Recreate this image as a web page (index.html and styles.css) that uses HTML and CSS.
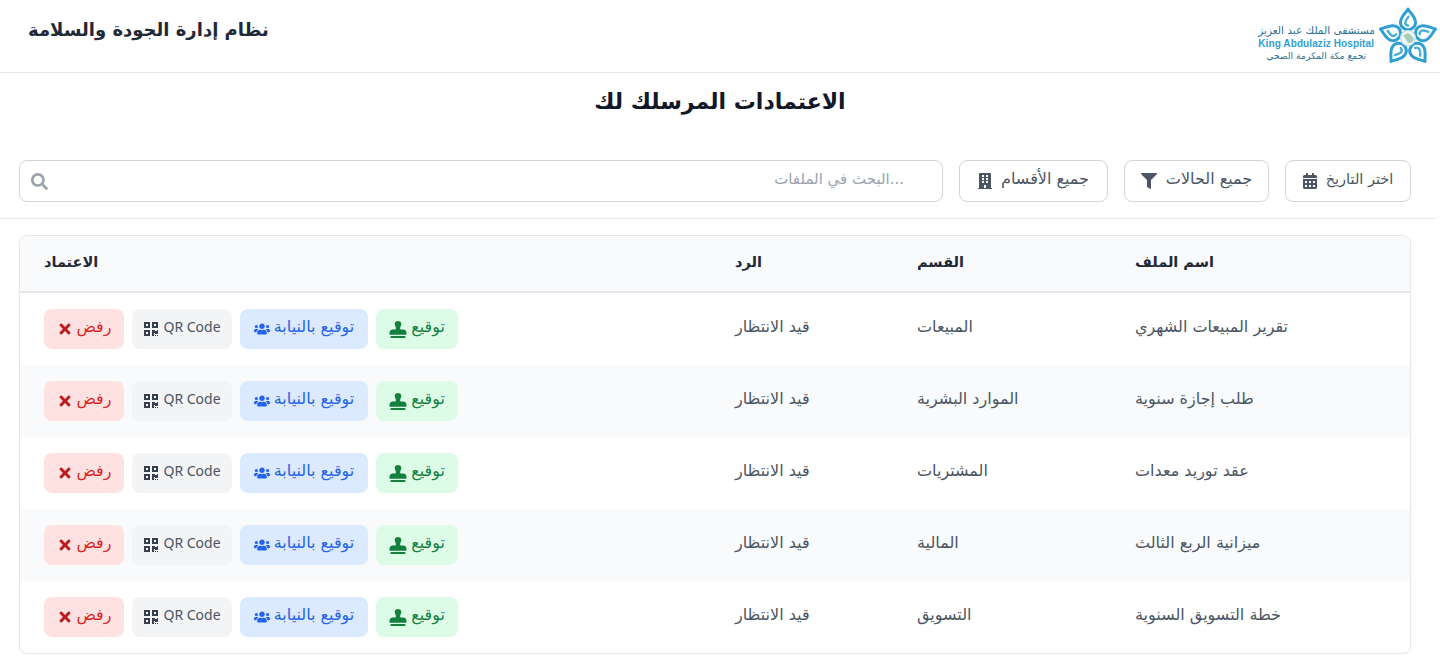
FILE: index.html
```html
<!DOCTYPE html>
<html lang="ar" dir="rtl">
<head>
	<meta charset="UTF-8">
	<title>نظام إدارة الجودة والسلامة</title>
	<link rel="stylesheet" href="styles.css">
</head>
<body>
	<svg class="icon-defs" xmlns="http://www.w3.org/2000/svg">
		<symbol id="i-search" viewBox="0 0 512 512"><path d="M505 442.7L405.3 343c-4.500-4.500-10.600-7-17-7H372c27.600-35.300 44-79.700 44-128C416 93.100 322.900 0 208 0S0 93.100 0 208s93.100 208 208 208c48.300 0 92.700-16.400 128-44v16.300c0 6.400 2.500 12.500 7 17l99.700 99.700c9.400 9.400 24.600 9.400 33.900 0l28.300-28.300c9.400-9.400 9.400-24.600.1-34zM208 336c-70.700 0-128-57.200-128-128 0-70.700 57.200-128 128-128 70.700 0 128 57.200 128 128 0 70.700-57.200 128-128 128z"/></symbol>
		<symbol id="i-filter" viewBox="0 0 512 512"><path d="M487.976 0H24.028C2.710 0-8.047 25.866 7.058 40.971L192 225.941V432c0 7.831 3.821 15.170 10.237 19.662l80 55.980C298.020 518.690 320 507.493 320 487.980V225.941l184.947-184.970C520.021 25.896 509.338 0 487.976 0z"/></symbol>
		<symbol id="i-calendar" viewBox="0 0 448 512"><path d="M0 464c0 26.500 21.500 48 48 48h352c26.500 0 48-21.500 48-48V192H0v272zm320-196c0-6.600 5.400-12 12-12h40c6.600 0 12 5.400 12 12v40c0 6.600-5.400 12-12 12h-40c-6.600 0-12-5.400-12-12v-40zm0 128c0-6.600 5.400-12 12-12h40c6.600 0 12 5.400 12 12v40c0 6.600-5.400 12-12 12h-40c-6.600 0-12-5.400-12-12v-40zM192 268c0-6.600 5.400-12 12-12h40c6.600 0 12 5.400 12 12v40c0 6.600-5.400 12-12 12h-40c-6.600 0-12-5.400-12-12v-40zm0 128c0-6.600 5.400-12 12-12h40c6.600 0 12 5.400 12 12v40c0 6.600-5.400 12-12 12h-40c-6.600 0-12-5.400-12-12v-40zM64 268c0-6.600 5.400-12 12-12h40c6.600 0 12 5.400 12 12v40c0 6.600-5.400 12-12 12H76c-6.600 0-12-5.400-12-12v-40zm0 128c0-6.600 5.400-12 12-12h40c6.600 0 12 5.400 12 12v40c0 6.600-5.400 12-12 12H76c-6.600 0-12-5.400-12-12v-40zM400 64h-48V16c0-8.800-7.200-16-16-16h-32c-8.800 0-16 7.200-16 16v48H160V16c0-8.800-7.200-16-16-16h-32c-8.800 0-16 7.200-16 16v48H48C21.500 64 0 85.500 0 112v48h448v-48c0-26.500-21.500-48-48-48z"/></symbol>
		<symbol id="i-building" viewBox="0 0 448 512"><path d="M436 480h-20V24c0-13.255-10.745-24-24-24H56C42.745 0 32 10.745 32 24v456H12c-6.627 0-12 5.373-12 12v20h448v-20c0-6.627-5.373-12-12-12zM128 76c0-6.627 5.373-12 12-12h40c6.627 0 12 5.373 12 12v40c0 6.627-5.373 12-12 12h-40c-6.627 0-12-5.373-12-12V76zm0 96c0-6.627 5.373-12 12-12h40c6.627 0 12 5.373 12 12v40c0 6.627-5.373 12-12 12h-40c-6.627 0-12-5.373-12-12v-40zm52 148h-40c-6.627 0-12-5.373-12-12v-40c0-6.627 5.373-12 12-12h40c6.627 0 12 5.373 12 12v40c0 6.627-5.373 12-12 12zm76 160h-64v-84c0-6.627 5.373-12 12-12h40c6.627 0 12 5.373 12 12v84zm64-172c0 6.627-5.373 12-12 12h-40c-6.627 0-12-5.373-12-12v-40c0-6.627 5.373-12 12-12h40c6.627 0 12 5.373 12 12v40zm0-96c0 6.627-5.373 12-12 12h-40c-6.627 0-12-5.373-12-12v-40c0-6.627 5.373-12 12-12h40c6.627 0 12 5.373 12 12v40zm0-96c0 6.627-5.373 12-12 12h-40c-6.627 0-12-5.373-12-12V76c0-6.627 5.373-12 12-12h40c6.627 0 12 5.373 12 12v40z"/></symbol>
		<symbol id="i-stamp" viewBox="0 0 512 512"><path d="M32 512h448v-64H32v64zm384-256h-66.560c-16.260 0-29.440-13.180-29.440-29.440v-9.460c0-27.370 8.880-53.410 21.460-77.720 9.410-18.180 15.090-38.650 14.540-60.530C354.990 28.890 305.340 0 255.950 0c-49.390 0-98.990 28.890-99.950 78.850-.55 21.880 5.130 42.350 14.540 60.530 12.580 24.310 21.460 50.350 21.460 77.720v9.460c0 16.260-13.180 29.440-29.440 29.440H96c-53.020 0-96 42.980-96 96v48c0 8.840 7.160 16 16 16h480c8.840 0 16-7.160 16-16v-48c0-53.020-42.980-96-96-96z"/></symbol>
		<symbol id="i-users" viewBox="0 0 640 512"><path d="M96 224c35.300 0 64-28.700 64-64s-28.700-64-64-64-64 28.700-64 64 28.700 64 64 64zm448 0c35.300 0 64-28.700 64-64s-28.700-64-64-64-64 28.700-64 64 28.700 64 64 64zm32 32h-64c-17.600 0-33.500 7.100-45.100 18.600 40.300 22.100 68.900 62 75.100 109.400h66c17.700 0 32-14.300 32-32v-32c0-35.300-28.700-64-64-64zm-256 0c61.900 0 112-50.100 112-112S381.900 32 320 32 208 82.100 208 144s50.100 112 112 112zm76.800 32h-8.300c-20.800 10-43.900 16-68.500 16s-47.600-6-68.500-16h-8.300C179.600 288 128 339.600 128 403.200V432c0 26.500 21.500 48 48 48h288c26.500 0 48-21.500 48-48v-28.800c0-63.600-51.600-115.200-115.200-115.200zm-223.700-13.400C161.500 263.100 145.600 256 128 256H64c-35.300 0-64 28.700-64 64v32c0 17.700 14.300 32 32 32h65.900c6.300-47.400 34.900-87.300 75.200-109.400z"/></symbol>
		<symbol id="i-qr" viewBox="0 0 448 512"><path d="M0 224h192V32H0v192zM64 96h64v64H64V96zm192-64v192h192V32H256zm128 128h-64V96h64v64zM0 480h192V288H0v192zm64-128h64v64H64v-64zm352-64h32v128h-96v-32h-32v96h-64V288h96v32h64v-32zm0 160h32v32h-32v-32zm-64 0h32v32h-32v-32z"/></symbol>
		<symbol id="i-times" viewBox="0 0 352 512"><path d="M242.720 256l100.070-100.070c12.280-12.280 12.280-32.190 0-44.480l-22.240-22.240c-12.280-12.280-32.190-12.280-44.480 0L176 189.280 75.930 89.210c-12.280-12.280-32.190-12.280-44.480 0L9.210 111.450c-12.280 12.280-12.280 32.190 0 44.480L109.280 256 9.210 356.070c-12.280 12.280-12.280 32.190 0 44.480l22.240 22.240c12.280 12.280 32.200 12.280 44.480 0L176 322.720l100.070 100.070c12.280 12.280 32.200 12.280 44.480 0l22.240-22.240c12.280-12.280 12.280-32.190 0-44.480L242.720 256z"/></symbol>
	</svg>

	<header class="topbar">
		<div class="logo">
			<svg class="logo-star" viewBox="0 0 60 60" xmlns="http://www.w3.org/2000/svg">
				<g id="petal" fill="none" stroke-linejoin="round" stroke-linecap="round">
					<path d="M30 3C27.500 7.500 22.500 10.500 22.500 16.500c0 4 3 6.500 7.500 7.500 4.500-1 7.500-3.500 7.500-7.500C37.500 10.500 32.500 7.500 30 3z" stroke="#2f9fd4" stroke-width="3"/>
					<path d="M30.500 10.500c-1 2-3.200 3.300-3.200 6 0 1.800 1.200 2.800 2.700 3.200" stroke="#4aaedb" stroke-width="2.400"/>
				</g>
				<use href="#petal" transform="rotate(72 30 32)"/>
				<use href="#petal" transform="rotate(144 30 32)"/>
				<use href="#petal" transform="rotate(216 30 32)"/>
				<use href="#petal" transform="rotate(288 30 32)"/>
				<circle cx="30" cy="32" r="7.500" fill="#f3f8f7" stroke="#bcdcea" stroke-width="1.200"/>
				<path d="M25 29.500l5-2.500 3 2 3 4-2 3.500-4 .5-2-3.500z" fill="#a9cdbd"/>
			</svg>
			<div class="logo-text">
				<span class="logo-ar">مستشفى الملك عبد العزيز</span>
				<span class="logo-en">King Abdulaziz Hospital</span>
				<span class="logo-sub">تجمع مكة المكرمة الصحي</span>
			</div>
		</div>
		<div class="system-name">نظام إدارة الجودة والسلامة</div>
	</header>

	<h1 class="page-title">الاعتمادات المرسلك لك</h1>

	<section class="filters">
		<button class="filter-btn filter-date"><span>اختر التاريخ</span><svg class="ico"><use href="#i-calendar"/></svg></button>
		<button class="filter-btn filter-status"><span>جميع الحالات</span><svg class="ico ico-wide"><use href="#i-filter"/></svg></button>
		<button class="filter-btn filter-dept"><span>جميع الأقسام</span><svg class="ico"><use href="#i-building"/></svg></button>
		<div class="search-box">
			<span class="search-hint">...البحث في الملفات</span>
			<svg class="search-ico"><use href="#i-search"/></svg>
		</div>
	</section>

	<main class="table-wrap">
		<table class="files">
			<colgroup>
				<col class="col-file"><col class="col-dept"><col class="col-reply"><col>
			</colgroup>
			<thead>
				<tr><th>اسم الملف</th><th>القسم</th><th>الرد</th><th>الاعتماد</th></tr>
			</thead>
			<tbody>
				<tr>
					<td>تقرير المبيعات الشهري</td><td>المبيعات</td><td>قيد الانتظار</td>
					<td><div class="actions">
						<button class="act act-sign"><span>توقيع</span><svg class="ico ico-stamp"><use href="#i-stamp"/></svg></button>
						<button class="act act-proxy"><span>توقيع بالنيابة</span><svg class="ico ico-wide"><use href="#i-users"/></svg></button>
						<button class="act act-qr"><span>QR Code</span><svg class="ico ico-wide"><use href="#i-qr"/></svg></button>
						<button class="act act-reject"><span>رفض</span><svg class="ico ico-wide"><use href="#i-times"/></svg></button>
					</div></td>
				</tr>
				<tr>
					<td>طلب إجازة سنوية</td><td>الموارد البشرية</td><td>قيد الانتظار</td>
					<td><div class="actions">
						<button class="act act-sign"><span>توقيع</span><svg class="ico ico-stamp"><use href="#i-stamp"/></svg></button>
						<button class="act act-proxy"><span>توقيع بالنيابة</span><svg class="ico ico-wide"><use href="#i-users"/></svg></button>
						<button class="act act-qr"><span>QR Code</span><svg class="ico ico-wide"><use href="#i-qr"/></svg></button>
						<button class="act act-reject"><span>رفض</span><svg class="ico ico-wide"><use href="#i-times"/></svg></button>
					</div></td>
				</tr>
				<tr>
					<td>عقد توريد معدات</td><td>المشتريات</td><td>قيد الانتظار</td>
					<td><div class="actions">
						<button class="act act-sign"><span>توقيع</span><svg class="ico ico-stamp"><use href="#i-stamp"/></svg></button>
						<button class="act act-proxy"><span>توقيع بالنيابة</span><svg class="ico ico-wide"><use href="#i-users"/></svg></button>
						<button class="act act-qr"><span>QR Code</span><svg class="ico ico-wide"><use href="#i-qr"/></svg></button>
						<button class="act act-reject"><span>رفض</span><svg class="ico ico-wide"><use href="#i-times"/></svg></button>
					</div></td>
				</tr>
				<tr>
					<td>ميزانية الربع الثالث</td><td>المالية</td><td>قيد الانتظار</td>
					<td><div class="actions">
						<button class="act act-sign"><span>توقيع</span><svg class="ico ico-stamp"><use href="#i-stamp"/></svg></button>
						<button class="act act-proxy"><span>توقيع بالنيابة</span><svg class="ico ico-wide"><use href="#i-users"/></svg></button>
						<button class="act act-qr"><span>QR Code</span><svg class="ico ico-wide"><use href="#i-qr"/></svg></button>
						<button class="act act-reject"><span>رفض</span><svg class="ico ico-wide"><use href="#i-times"/></svg></button>
					</div></td>
				</tr>
				<tr>
					<td>خطة التسويق السنوية</td><td>التسويق</td><td>قيد الانتظار</td>
					<td><div class="actions">
						<button class="act act-sign"><span>توقيع</span><svg class="ico ico-stamp"><use href="#i-stamp"/></svg></button>
						<button class="act act-proxy"><span>توقيع بالنيابة</span><svg class="ico ico-wide"><use href="#i-users"/></svg></button>
						<button class="act act-qr"><span>QR Code</span><svg class="ico ico-wide"><use href="#i-qr"/></svg></button>
						<button class="act act-reject"><span>رفض</span><svg class="ico ico-wide"><use href="#i-times"/></svg></button>
					</div></td>
				</tr>
			</tbody>
		</table>
	</main>
</body>
</html>
```

FILE: styles.css
```css
* {
	box-sizing: border-box;
}

body {
	margin: 0;
	background-color: #fff;
	color: #374151;
	font-family: "DejaVu Sans", "Noto Sans", sans-serif;
	font-size: 16px;
}

button {
	font-family: inherit;
	cursor: pointer;
}

.icon-defs {
	display: none;
}

.ico {
	width: 14px;
	height: 16px;
	fill: currentColor;
	flex-shrink: 0;
}

.ico-wide {
	width: 16px;
}

.ico-stamp {
	width: 18px;
	height: 17px;
}

/* header */
.topbar {
	display: flex;
	justify-content: space-between;
	align-items: center;
	height: 73px;
	padding: 0 2px 0 28px;
	border-bottom: 1px solid #e5e7eb;
}

.logo {
	display: flex;
	align-items: center;
	gap: 3px;
}

.logo-star {
	width: 60px;
	height: 60px;
}

.logo-text {
	display: flex;
	flex-direction: column;
	align-items: flex-end;
	padding-top: 11px;
	color: #2b6f96;
}

.logo-ar {
	font-size: 10.500px;
	line-height: 14px;
}

.logo-en {
	direction: ltr;
	font-family: "Liberation Sans", sans-serif;
	font-size: 10px;
	font-weight: bold;
	letter-spacing: 0.1px;
	line-height: 13px;
	color: #2f9fd4;
}

.logo-sub {
	font-size: 9.200px;
	line-height: 11px;
	margin-left: 8px;
}

.system-name {
	padding-bottom: 14px;
	font-size: 18px;
	font-weight: bold;
	color: #1f2937;
}

.page-title {
	margin: 17px 0 0;
	height: 70px;
	text-align: center;
	font-size: 22px;
	line-height: 24px;
	color: #111827;
}

/* filter bar */
.filters {
	display: flex;
	gap: 16px;
	height: 59px;
	margin-right: 5px;
	padding: 0 24px 16px 19px;
	border-bottom: 1px solid #e5e7eb;
}

.filter-btn {
	display: flex;
	justify-content: center;
	align-items: center;
	gap: 9px;
	height: 42px;
	background: #fff;
	border: 1px solid #d1d5db;
	border-radius: 8px;
	color: #4b5563;
	font-size: 16px;
}

.filter-btn span {
	padding-bottom: 5px;
}

.filter-date {
	width: 126px;
	font-size: 14.500px;
}

.filter-status {
	width: 145px;
}

.filter-dept {
	width: 149px;
}

.search-box {
	flex: 1;
	display: flex;
	justify-content: space-between;
	align-items: center;
	height: 42px;
	padding: 0 38px 0 11px;
	border: 1px solid #d1d5db;
	border-radius: 8px;
	color: #9ca3af;
	font-size: 15px;
}

.search-hint {
	padding-bottom: 5px;
}

.search-ico {
	width: 17px;
	height: 17px;
	fill: #9ca3af;
}

/* table */
.table-wrap {
	margin: 16px 29px 0 19px;
	border: 1px solid #e5e7eb;
	border-radius: 8px;
	box-shadow: 0 1px 2px rgba(0, 0, 0, 0.05);
	overflow: hidden;
}

.files {
	width: 100%;
	border-collapse: separate;
	border-spacing: 0;
	table-layout: fixed;
}

.col-file {
	width: 299px;
}

.col-dept {
	width: 218px;
}

.col-reply {
	width: 182px;
}

.files th {
	height: 57px;
	padding: 0 24px 4px;
	background-color: #f9fafb;
	border-bottom: 2px solid #e5e7eb;
	text-align: left;
	font-size: 14.500px;
	color: #1f2937;
}

.files td {
	height: 72px;
	padding: 0 24px 6px;
	text-align: left;
	color: #4b5563;
}

.files td:last-child {
	padding-bottom: 0;
}

.files tbody tr:nth-child(even) {
	background-color: #f9fafb;
}

.actions {
	display: flex;
	justify-content: flex-end;
	gap: 8px;
}

.act {
	display: flex;
	justify-content: center;
	align-items: center;
	gap: 4px;
	height: 40px;
	padding: 0;
	border: none;
	border-radius: 8px;
	font-size: 16px;
}

.act span {
	padding-bottom: 6px;
}

.act-sign {
	width: 82px;
	background-color: #dcfce7;
	color: #15803d;
}

.act-proxy {
	width: 128px;
	background-color: #dbeafe;
	color: #2563eb;
}

.act-qr {
	width: 100px;
	background-color: #f3f4f6;
	color: #374151;
	font-family: "Noto Sans", sans-serif;
	font-size: 14px;
}

.act-qr span {
	color: #4b5563;
}

.act-reject {
	width: 80px;
	background-color: #fee2e2;
	color: #b91c1c;
}

.act-reject span {
	color: #dc2626;
}
```
